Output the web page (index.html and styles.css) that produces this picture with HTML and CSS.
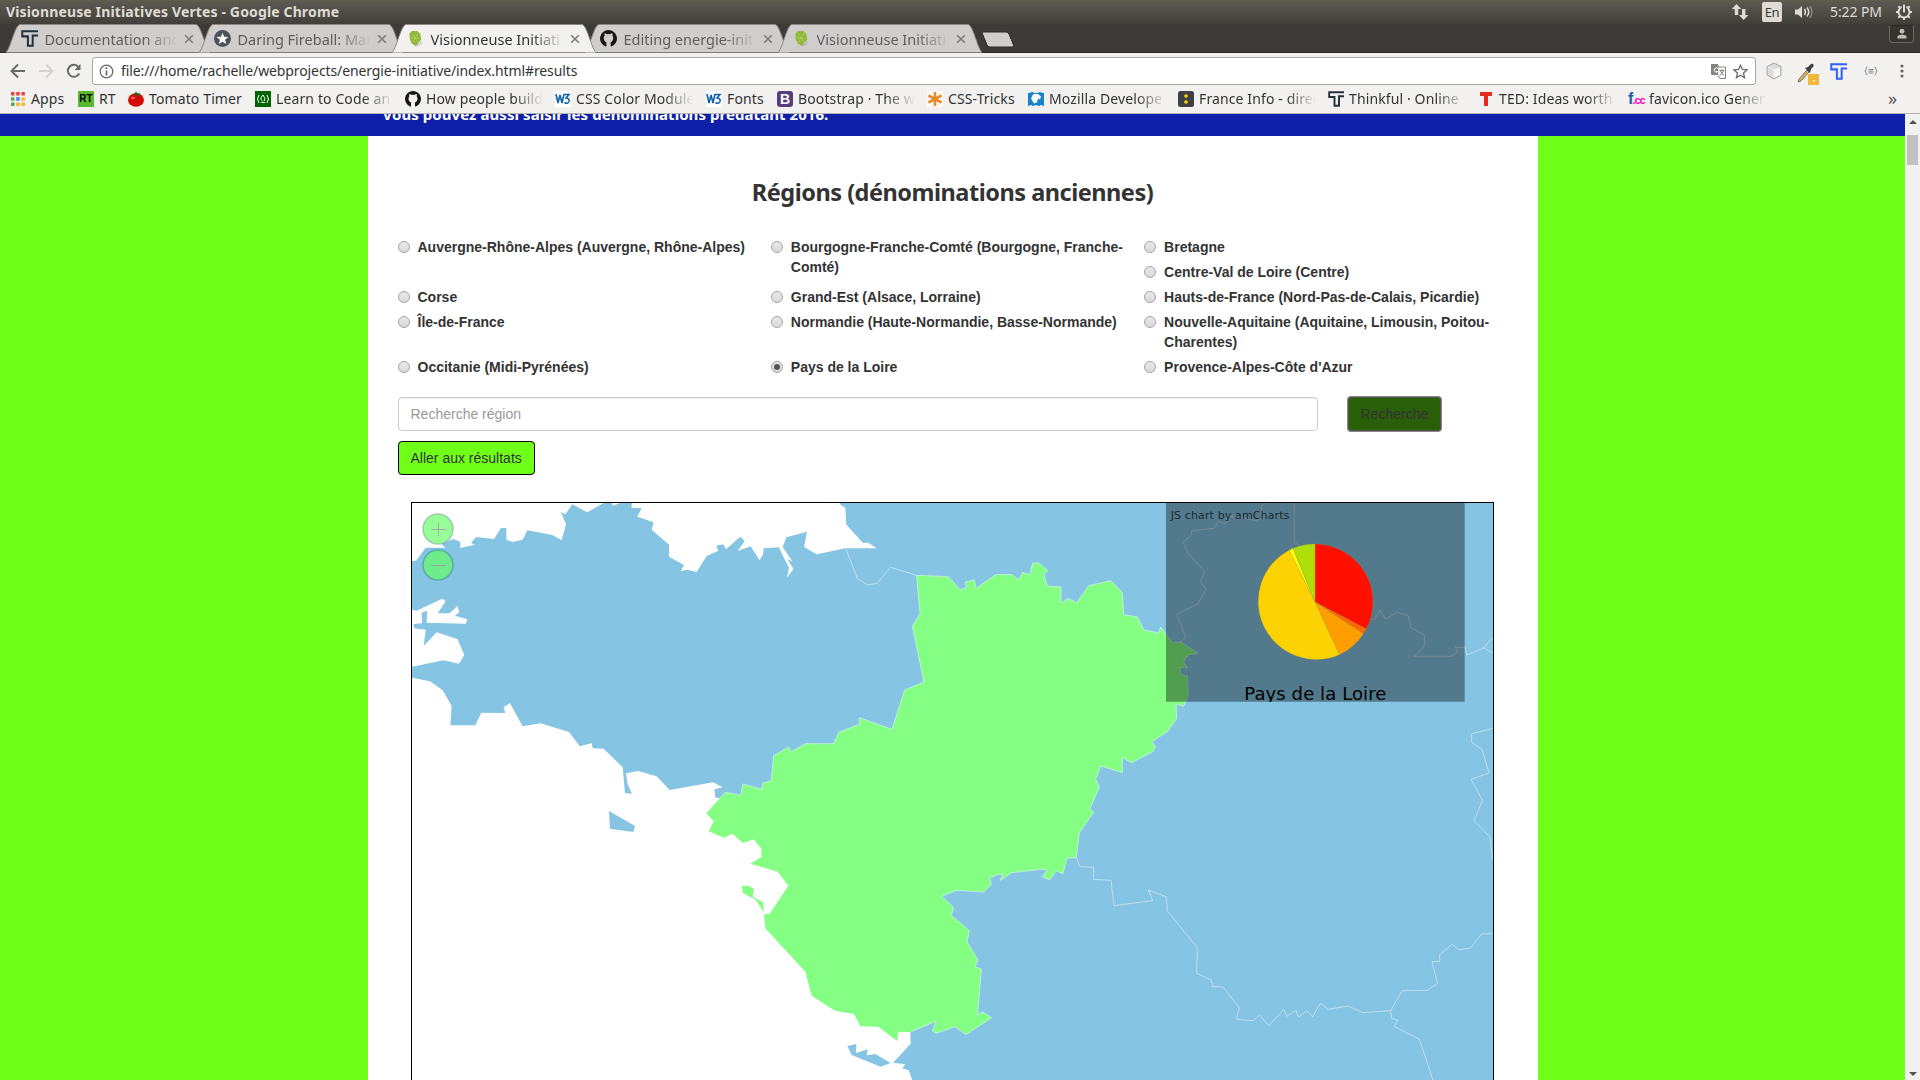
FILE: index.html
```html
<!DOCTYPE html>
<html lang="fr">
<head>
<meta charset="utf-8">
<title>Visionneuse Initiatives Vertes</title>
<link rel="stylesheet" href="styles.css">
</head>
<body>
<svg class="defs" width="0" height="0">
  <symbol id="thinkful" viewBox="0 0 16 16"><path d="M16 1.200H1.200V6H6.500V14.800H11V5.200H16" fill="none" stroke="currentColor" stroke-width="1.900"/></symbol>
  <symbol id="github" viewBox="0 0 16 16"><path fill="#161614" fill-rule="evenodd" d="M8 0a8 8 0 0 0-3 15.400c.6.200 1 0 1-.5v-3.400C4.200 10.800 3.500 9.300 3.500 7.500c0-.9.300-1.600.8-2.100-.2-.6-.2-1.400.1-2.300.8 0 1.500.3 2.200.8a7 7 0 0 1 2.800 0c.7-.5 1.400-.8 2.200-.8.3.9.3 1.700.1 2.300.5.500.8 1.200.8 2.100 0 1.800-.7 3.300-2.500 4v3.400c0 .5.4.7 1 .5A8 8 0 0 0 8 0z"/></symbol>
  <symbol id="leaf" viewBox="0 0 16 18"><path d="M4 1h6l3 3 1 6-3 4-3 3-4-3-2-4-.5-6z" fill="#8fb93a"/><path d="M5 4l6 9M11 3L5 13M3 8l9 1" stroke="#b9d36b" stroke-width=".7"/><path d="M8 17l5-2 1-3" stroke="#aaa" fill="none"/></symbol>
  <symbol id="close" viewBox="0 0 10 10"><path d="M1.200 1.200l7.600 7.600M8.800 1.200L1.200 8.800" stroke="#7d7c7b" stroke-width="1.600"/></symbol>
  <symbol id="tabshape" viewBox="0 0 204 29"><path d="M0 28.500C5 23 9 1 14 .500H190C195 1 199 23 204 28.500" fill="currentColor" stroke="#8a8987" stroke-width="1"/></symbol>
  <symbol id="w3" viewBox="0 0 16 16"><path fill="#fff" d="M0 0h16v16H0z"/><path d="M1 3l2 9 2-8 2 8 2-9M9 3.500h5l-3 3.500q4 .5 3 3.500-1.500 3-4.500 1" fill="none" stroke="#1162a8" stroke-width="1.600"/></symbol>
</svg>

<header class="titlebar">
  <span class="wtitle">Visionneuse Initiatives Vertes - Google Chrome</span>
  <div class="tray">
    <svg class="updown" width="18" height="18" viewBox="0 0 18 18"><path d="M5.500 1L.8 6h3v6h3.400V6h3zM12.700 17l4.700-5h-3V6H11v6H8z" fill="#dfdbd2"/></svg>
    <span class="lang">En</span>
    <svg class="vol" width="20" height="16" viewBox="0 0 20 16"><path d="M1 5.500h3l4-3.500v12L4 10.500H1z" fill="#dfdbd2"/><path d="M10.500 5q2 3 0 6M13 3.500q3.500 4.500 0 9" fill="none" stroke="#dfdbd2" stroke-width="1.500"/><path d="M15.500 2q5 6 0 12" fill="none" stroke="#8d8a82" stroke-width="1.300"/></svg>
    <span class="clock">5:22 PM</span>
    <svg class="gear" width="18" height="18" viewBox="0 0 18 18"><circle cx="9" cy="9" r="5.500" fill="none" stroke="#dfdbd2" stroke-width="2"/><path d="M9 14v3M1 9h3M14 9h3M3.300 3.300l2 2M12.700 12.700l2 2M14.700 3.300l-2 2M3.300 14.700l2-2" stroke="#dfdbd2" stroke-width="2"/><path d="M9 1v6" stroke="#4b4a44" stroke-width="4.500"/><path d="M9 1.500v8" stroke="#dfdbd2" stroke-width="2"/></svg>
  </div>
</header>

<nav class="tabstrip">
  <div class="tab"><svg class="shape"><use href="#tabshape"/></svg><svg class="fav navy"><use href="#thinkful"/></svg><span class="tt">Documentation and</span><svg class="x"><use href="#close"/></svg></div>
  <div class="tab"><svg class="shape"><use href="#tabshape"/></svg><svg class="fav" viewBox="0 0 16 16"><circle cx="8" cy="8" r="8" fill="#4a525a"/><path fill="#fff" d="M8 2.500l1.500 3.900 4.100.2-3.200 2.600 1.100 4L8 11l-3.500 2.200 1.100-4L2.400 6.600l4.100-.2z"/></svg><span class="tt">Daring Fireball: Mar</span><svg class="x"><use href="#close"/></svg></div>
  <div class="tab active"><svg class="shape"><use href="#tabshape"/></svg><svg class="fav"><use href="#leaf"/></svg><span class="tt">Visionneuse Initiati</span><svg class="x"><use href="#close"/></svg></div>
  <div class="tab"><svg class="shape"><use href="#tabshape"/></svg><svg class="fav"><use href="#github"/></svg><span class="tt">Editing energie-init</span><svg class="x"><use href="#close"/></svg></div>
  <div class="tab"><svg class="shape"><use href="#tabshape"/></svg><svg class="fav"><use href="#leaf"/></svg><span class="tt">Visionneuse Initiati</span><svg class="x"><use href="#close"/></svg></div>
  <svg class="newtab" width="36" height="17" viewBox="0 0 36 17"><path d="M3.500 1H26q2 0 3 2l4.500 11q.5 2-1.500 2H10q-2 0-3-2L2.500 3q-.5-2 1-2z" fill="#d0cecd" stroke="#2c2b28"/></svg>
  <div class="profile"><svg width="12" height="12" viewBox="0 0 12 12"><circle cx="6" cy="3.200" r="2.400" fill="#bfbdb8"/><path d="M1.500 10.500V8q2-1.500 4.500-1.500T10.500 8v2.500z" fill="#bfbdb8"/></svg></div>
</nav>

<div class="toolbar">
  <svg class="navicon" viewBox="0 0 16 16"><path d="M15 8H2M8 1.500L1.500 8 8 14.500" fill="none" stroke="#6b6a69" stroke-width="2"/></svg>
  <svg class="navicon" viewBox="0 0 16 16"><path d="M1 8h13M8 1.500L14.500 8 8 14.500" fill="none" stroke="#d3d2d1" stroke-width="2"/></svg>
  <svg class="navicon" viewBox="0 0 16 16"><path d="M13.200 10.500A6 6 0 1 1 12.500 4" fill="none" stroke="#6b6a69" stroke-width="2"/><path d="M14.500 1v6h-6z" fill="#6b6a69"/></svg>
  <div class="omnibox">
    <svg width="15" height="15" viewBox="0 0 15 15"><circle cx="7.500" cy="7.500" r="6.300" fill="none" stroke="#6b6a69" stroke-width="1.300"/><path d="M7.500 3.300v1.800M7.500 6.500v5" stroke="#6b6a69" stroke-width="1.700"/></svg>
    <span class="url">file:///home/rachelle/webprojects/energie-initiative/index.html#results</span>
    <svg width="15" height="15" viewBox="0 0 15 15"><path d="M0 0h7l3 11H1q-1 0-1-1z" fill="#858483"/><path d="M7.500 3H14.500V14.500H9L7 11.500" fill="#fff" stroke="#858483"/><path d="M8.500 6.500h5M11 5v1.500M12.500 6.500q-1 3.500-4 5M9.500 7q1 3 3.500 4.500" stroke="#858483" fill="none"/><path d="M7 4.500a2.200 2.200 0 1 0 0 3H5" stroke="#fff" fill="none"/></svg>
    <svg width="15" height="15" viewBox="0 0 15 15"><path d="M7.500 1.200l1.900 4.300 4.600.4-3.500 3.100 1 4.600-4-2.400-4 2.400 1-4.600L1 5.900l4.600-.4z" fill="none" stroke="#6b6a69" stroke-width="1.300"/></svg>
  </div>
  <svg class="ext" viewBox="0 0 18 18"><path d="M9 1l7 3.500v8.500l-7 4-7-4V4.500z" fill="#dcdcdc" stroke="#a5a5a5"/><path d="M9 8l6-3v8L9 16z" fill="#f7f7f7"/><path d="M3 5l6 3v8" stroke="#f2f2f2" fill="none"/></svg>
  <svg class="ext dropper" viewBox="0 0 22 22"><path d="M2 16l8-9 2 2-8 9-3 1z" fill="#e0b050" stroke="#777"/><path d="M8 5l3-1 3-3q3-1 2.500 2.500L14 6l-1 4z" fill="#3c4043"/><path fill="#f0b93c" d="M11 11h11v11H11z"/><path fill="#fff" d="M16 17h1.500v1.500H16z"/></svg>
  <svg class="ext blue"><use href="#thinkful"/></svg>
  <svg class="ext json" viewBox="0 0 14 12"><path d="M3.500 2Q2 2 2 4t-1.200 2Q2 6 2 8t1.500 2M10.500 2q1.500 0 1.500 2t1.200 2Q12 6 12 8t-1.500 2M4.500 4.500h5M4.500 6.200h5M4.500 8h5" fill="none" stroke="#8a8988"/></svg>
  <svg class="menu" viewBox="0 0 4 14"><circle cx="2" cy="2" r="1.600" fill="#6b6a69"/><circle cx="2" cy="7" r="1.600" fill="#6b6a69"/><circle cx="2" cy="12" r="1.600" fill="#6b6a69"/></svg>
</div>

<div class="bookmarks">
  <a class="bm"><svg viewBox="0 0 16 16"><path fill="#e8453c" d="M1 1h3.500v3.500H1zM6.200 1h3.500v3.500H6.200zM11.400 1h3.500v3.500h-3.500z"/><path fill="#4caf50" d="M1 6.200h3.500v3.500H1zM1 11.400h3.500v3.500H1z"/><path fill="#4285f4" d="M6.200 6.200h3.500v3.500H6.200z"/><path fill="#f9b42d" d="M11.400 6.200h3.500v3.500h-3.500zM6.200 11.400h3.500v3.500H6.200zM11.400 11.400h3.500v3.500h-3.500z"/></svg><span>Apps</span></a>
  <a class="bm"><span class="ico rt">RT</span><span>RT</span></a>
  <a class="bm"><svg viewBox="0 0 16 16"><ellipse cx="8" cy="9" rx="8" ry="6.800" fill="#d40b05"/><ellipse cx="5" cy="7" rx="2" ry="1.300" fill="#f56a5a"/><path d="M8 4L4 3l3-.5L8 0l1 2.500 4 0-3 1.500 1 3-3-3-3 2z" fill="#126b14"/></svg><span>Tomato Timer</span></a>
  <a class="bm cut"><svg viewBox="0 0 16 16"><path fill="#006400" d="M0 0h16v16H0z"/><path d="M4 4q-3 4 0 8M12 4q3 4 0 8M6 11.500h4M8 4q-4 4-.5 6M8 4q3.500 4 1 6" fill="none" stroke="#fff"/></svg><span>Learn to Code an</span></a>
  <a class="bm cut"><svg><use href="#github"/></svg><span>How people build</span></a>
  <a class="bm cut"><svg><use href="#w3"/></svg><span>CSS Color Module</span></a>
  <a class="bm"><svg><use href="#w3"/></svg><span>Fonts</span></a>
  <a class="bm cut"><span class="ico boot">B</span><span>Bootstrap · The w</span></a>
  <a class="bm"><svg viewBox="0 0 16 16"><path fill="#fffaf3" d="M0 0h16v16H0z"/><path d="M8 1v14M1.500 4.500l13 7M14.500 4.500l-13 7" stroke="#e58a2b" stroke-width="2.600"/></svg><span>CSS-Tricks</span></a>
  <a class="bm cut"><svg viewBox="0 0 16 16"><path fill="#1583c8" d="M0 2q2 0 4-1 4 2 8 0 2 1 4 1v13l-3-1-2 1-3-1-3 1-2-1-3 1z"/><path d="M5 3.500q5-2 8 2l-1 3-2-1-1 4-3 1-3-5z" fill="#fff"/></svg><span>Mozilla Develope</span></a>
  <a class="bm cut"><svg viewBox="0 0 16 16"><rect width="16" height="16" rx="2.500" fill="#3e4043"/><circle cx="8" cy="5" r="1.800" fill="#ffd900"/><circle cx="8" cy="11" r="1.800" fill="#ffd900"/></svg><span>France Info - direc</span></a>
  <a class="bm cut"><svg class="navy"><use href="#thinkful"/></svg><span>Thinkful · Online</span></a>
  <a class="bm cut"><svg viewBox="0 0 16 16"><path fill="#e62b1e" d="M2 1h12v4h-4v10H6V5H2z"/></svg><span>TED: Ideas worth</span></a>
  <a class="bm cut"><span class="ico fav-cc"><b>f</b>.cc</span><span>favicon.ico Gener</span></a>
  <span class="more">»</span>
</div>

<div class="viewport">
  <main class="page">
    <div class="banner"><div class="wrap"><p>Vous pouvez aussi saisir les dénominations prédatant 2016.</p></div></div>
    <section class="wrap panel">
      <h3>Régions (dénominations anciennes)</h3>
      <form>
        <div class="regions">
          <label><i></i>Auvergne-Rhône-Alpes (Auvergne, Rhône-Alpes)</label>
          <label><i></i>Bourgogne-Franche-Comté (Bourgogne, Franche-Comté)</label>
          <div class="stack"><label><i></i>Bretagne</label><label><i></i>Centre-Val de Loire (Centre)</label></div>
          <label><i></i>Corse</label>
          <label><i></i>Grand-Est (Alsace, Lorraine)</label>
          <label><i></i>Hauts-de-France (Nord-Pas-de-Calais, Picardie)</label>
          <label><i></i>Île-de-France</label>
          <label><i></i>Normandie (Haute-Normandie, Basse-Normande)</label>
          <label><i></i>Nouvelle-Aquitaine (Aquitaine, Limousin, Poitou-Charentes)</label>
          <label><i></i>Occitanie (Midi-Pyrénées)</label>
          <label><i class="on"></i>Pays de la Loire</label>
          <label><i></i>Provence-Alpes-Côte d'Azur</label>
        </div>
        <div class="search">
          <input type="text" placeholder="Recherche région">
          <button type="button" class="btn dark">Recherche</button>
        </div>
        <button type="button" class="btn">Aller aux résultats</button>
      </form>
      <div class="map">
        <svg class="land" viewBox="36 39 3243 1731" width="1081" height="577">
          <g fill="#85c4e3">
            <path d="M3300 20H1320V39L1322 45 1336 53 1339 104 1389 159 1405 158 1430 175 1337 175 1250 193 1212 171 1221 125 1159 142 1148 171 1178 215 1162 207 1180 237 1161 264 1167 233 1136 172 1091 175 1089 194 1079 211 1052 169 1013 183 1034 153 1021 140 978 178 970 163 949 167 955 182 920 198 890 246 860 239 842 244 852 225 807 200 807 164 755 119 761 97 712 80 725 54 695 54 695 30 660 39 638 47 636 39 611 39 562 67 517 43 496 73 483 66 498 103 485 151 457 135 382 121 368 149 337 156 319 149 319 114 303 114 282 147 229 141 213 158 224 164 181 174 181 155 160 147 124 162 136 173 77 173 48 212 36 214H20V356L50 362 127 326 137 334 113 370 149 370 172 348 178 367 165 377 202 388 197 401 80 398 81 362 65 368 66 400 40 402 43 415 77 419 71 468 110 427 173 448 193 495 177 521 130 511 36 530H20V560L36 563 90 574 128 601 155 648 151 706 226 706 244 668 316 669 311 652 330 640 368 709 422 700 507 726 539 769 575 760 578 775 611 776 668 832 675 909 696 911 683 883 678 850 714 843 770 859 809 900 939 877 968 892 943 898 946 923 960 924 1200 940 1500 1500 1531 1626 1532 1661 1479 1718 1516 1723 1507 1735 1526 1741 1537 1770V1790H3300Z"/>
            <path d="M627 963L705 1008 700 1026 630 1016ZM1342 1668L1369 1662 1368 1689 1403 1678 1400 1696 1426 1692 1472 1719 1442 1730 1355 1695Z"/>
          </g>
          <g fill="#84ff84">
            <path stroke="#c9f1e2" stroke-width="2.500" d="M960 924L976 907 1022 916 1029 882 1086 898 1088 879 1114 872 1121 797 1166 771 1174 785 1216 761 1301 761 1316 727 1378 703 1378 683 1476 718 1514 600 1572 576 1537 409 1560 371 1550 256 1645 260 1681 300 1700 291 1695 277 1723 269 1728 295 1787 254 1836 254 1855 269 1868 247 1890 254 1898 219 1917 219 1943 242 1932 254 1942 288 1983 291 1983 339 2004 325 2030 338 2066 287 2132 272 2167 308 2171 374 2212 381 2232 420 2276 429 2282 411 2317 458 2343 455 2393 490 2366 494 2350 515 2362 533 2341 533 2342 553 2362 559 2365 614 2351 649 2328 642 2330 686 2303 724 2255 755 2267 771 2258 785 2195 818 2167 803 2167 848 2103 828 2087 868 2098 892 2070 956 2081 967 2038 1028 2029 1103 2001 1104 1989 1151 1969 1142 1949 1170 1927 1160 1943 1140 1923 1138 1835 1148 1801 1171 1808 1154 1794 1153 1769 1164 1774 1184 1751 1206 1669 1201 1625 1219 1661 1253 1654 1276 1708 1322 1701 1355 1734 1411 1726 1430 1744 1437 1733 1575 1747 1565 1775 1583 1698 1634 1665 1610 1608 1630 1597 1622 1609 1593 1531 1626"/>
            <path d="M1531 1626L1494 1627 1492 1653 1435 1610 1381 1609 1362 1572 1305 1562 1235 1517 1216 1445 1096 1315 1092 1273 1109 1271 1165 1187 1133 1145 1051 1121 1085 1100 1083 1040 1029 1059 997 1031 972 1043 926 1024 941 994 919 970 960 924 1200 940 1560 1560Z"/>
            <path d="M1025 1188L1047 1187 1062 1198 1058 1220 1089 1236 1091 1267 1068 1230 1029 1209Z"/>
          </g>
          <g fill="none" stroke="#fff" stroke-width="3" stroke-opacity=".45">
            <path d="M1337 175L1372 265 1402 285 1431 280 1472 232 1550 256"/>
            <path transform="translate(2220)" d="M123 455L137 442 111 373 174 341 199 298 181 275 194 244 145 190 128 156 152 139 156 122 222 115 235 94 258 102 261 80 288 80 350 92 363 85 365 46 378 39M463 39V155L480 170 520 300 695 388 704 388 719 360 737 388 772 366 805 378 813 413 853 435 853 470 822 499 934 499 953 486 946 472 974 472 981 495 1031 474 1060 440M1031 474L1060 489M1060 715L995 731 995 757 1026 778 1047 849 993 868 1028 931 1002 992 1050 1041 1058 1110"/>
            <path transform="translate(1980 750)" d="M49 353L59 380 101 382 101 418 153 421 162 497 278 482 265 450 318 470 323 514 412 623 410 700 454 720 457 740 489 741 538 803 529 838 579 842 599 825 626 857 672 809 680 829 708 811 715 831 740 813 758 830 781 790 804 808 864 798 908 818 992 812 995 835 1014 841 1002 859 1078 898 1119 1020M992 812L1027 752 1102 751 1133 730 1116 665 1139 664 1139 644 1177 612 1195 629 1232 624 1264 582 1300 581"/>
          </g>
        </svg>
        <div class="zoom">
          <svg viewBox="0 0 32 32"><circle cx="16" cy="16" r="15" fill="#6fff6f" fill-opacity=".72" stroke="#789a90" stroke-opacity=".5" stroke-width="1.500"/><path d="M9.500 16.500h14M16.500 9.500v14" stroke="#a8a4a8"/></svg>
          <svg viewBox="0 0 32 32"><circle cx="16" cy="16" r="15" fill="#6cf082" fill-opacity=".9" stroke="#4a9c9a" stroke-opacity=".7" stroke-width="1.500"/><path d="M9.500 16.500h14" stroke="#9aa59f"/></svg>
        </div>
        <svg class="chart" viewBox="78 39 897 597" width="299" height="199">
          <path d="M78 39H974V635H78Z" fill-opacity=".38"/>
          <text x="92" y="87" font-size="33" textLength="356" fill-opacity=".7">JS chart by amCharts</text>
          <g stroke="#a89a40" stroke-opacity=".3" stroke-width="2">
            <path fill="#ff0f00" d="M525 336V162A174 174 0 0 1 679 417Z"/>
            <path fill="#ff6600" d="M525 336L679 417A174 174 0 0 1 670 431Z"/>
            <path fill="#ff9e01" d="M525 336L670 431A174 174 0 0 1 598 494Z"/>
            <path fill="#fcd202" d="M525 336L598 494A174 174 0 0 1 447.500 180.500Z"/>
            <path fill="#f8ff01" d="M525 336L447.500 180.500A174 174 0 0 1 459 175Z"/>
            <path fill="#b0de09" d="M525 336L459 175A174 174 0 0 1 525 162Z"/>
          </g>
          <text x="313" y="630" font-size="54" textLength="426">Pays de la Loire</text>
        </svg>
      </div>
    </section>
  </main>
  <div class="scrollbar"><b class="up"></b><b class="thumb"></b><b class="down"></b></div>
</div>
</body>
</html>
```
FILE: styles.css
```css
* { box-sizing: border-box; }
html, body { height: 100%; }
body { margin: 0; height: 1080px; overflow: hidden; display: flex; flex-direction: column; font-family: "Noto Sans", "Open Sans", sans-serif; font-size: 14px; color: #333; background: #fff; }
.defs { position: absolute; }

.titlebar { flex: none; height: 24px; display: flex; align-items: center; justify-content: space-between; padding: 0 7px 0 6px; background: linear-gradient(#615e50 0, #5a5850 10%, #403f3a); color: #dfdbd2; }
.wtitle { font-weight: bold; font-size: 14px; line-height: 20px; letter-spacing: .14px; white-space: nowrap; }
.tray { display: flex; align-items: center; }
.updown { margin-right: 13px; }
.lang { width: 20px; height: 20px; margin: 0 12px 0 0; border-radius: 2px; background: #dfdbd2; color: #3c3b37; font-size: 13px; line-height: 20px; text-align: center; letter-spacing: -.5px; }
.clock { width: 53px; margin: 0 12px 0 16px; font-size: 14px; line-height: 18px; letter-spacing: -.1px; white-space: nowrap; }

.tabstrip { flex: none; height: 29px; display: flex; padding-left: 5.500px; background: #3c3b37; border-bottom: 1px solid #2c2b28; position: relative; z-index: 1; }
.tab { position: relative; width: 204px; height: 29px; margin-right: -11px; display: flex; align-items: center; padding-left: 15px; color: #d0cecd; flex: none; }
.tab.active { color: #f2f1f0; z-index: 2; }
.shape { position: absolute; left: 0; top: 0; width: 204px; height: 29px; }
.fav { position: relative; width: 17px; height: 17px; flex: none; margin-right: 7px; }
.navy { color: #25303b; }
.tt { position: relative; width: 134px; white-space: nowrap; color: #5f5e5d; font-size: 14.500px; line-height: 20px; -webkit-mask-image: linear-gradient(90deg, #000 100px, transparent 133px); mask-image: linear-gradient(90deg, #000 100px, transparent 133px); }
.active .tt { color: #333; }
.x { position: relative; width: 10px; height: 10px; margin-left: 5px; }
.newtab { margin: 7px 0 0 9px; flex: none; }
.profile { width: 25px; height: 18px; margin: 1px 6px 0 auto; display: flex; align-items: center; justify-content: center; border: 1px solid #6b6965; border-top-color: #2c2b28; border-radius: 0 0 4px 4px; background: #35342f; }

.toolbar { flex: none; height: 33px; display: flex; align-items: center; padding: 3px 16px 0 10px; background: #f2f1f0; }
.navicon { width: 16px; height: 16px; margin-right: 12px; flex: none; }
.omnibox { flex: none; width: 1664px; height: 28px; display: flex; align-items: center; gap: 7px; margin-left: -2px; padding: 0 7px 0 6px; background: #fff; border: 1px solid #a9a8a7; border-radius: 3px; }
.url { flex: 1; color: #333; font-size: 14px; letter-spacing: -.11px; line-height: 20px; margin-top: -1px; white-space: nowrap; }
.ext { flex: none; width: 18px; height: 18px; margin-left: 9px; }
.dropper { width: 22px; height: 22px; margin: 5px -1px 0 14px; }
.blue { width: 17px; height: 17px; color: #2f5fff; margin-left: 12px; }
.blue, .fav, .bm svg { overflow: hidden; }
.json { width: 14px; height: 12px; margin-left: 17px; }
.menu { width: 4px; height: 16px; margin: 0 0 0 auto; flex: none; }

.bookmarks { flex: none; height: 28px; padding: 0 0 2px 10px; display: grid; grid-template-columns: 68px 50px 127px 150px 150px 151px 71px 150px 101px 150px 150px 150px 150px 150px 1fr; align-items: center; background: #f2f1f0; border-bottom: 1px solid #b6b4b2; }
.bm { display: flex; align-items: center; gap: 5px; color: #333; font-size: 14px; letter-spacing: .12px; line-height: 22px; white-space: nowrap; min-width: 0; }
.bm > svg, .ico { width: 16px; height: 16px; flex: none; }
.bm > span:last-child { margin-top: 1px; }
.cut > span:last-child { width: 118px; -webkit-mask-image: linear-gradient(90deg, #000 88px, transparent 117px); mask-image: linear-gradient(90deg, #000 88px, transparent 117px); }
.ico { font: bold 11px/16px "Liberation Sans", sans-serif; text-align: center; }
.rt { background: #5cb82c; color: #000; font-size: 10px; }
.boot { background: #563d7c; color: #fff; border-radius: 3px; font-size: 14px; }
.fav-cc { color: #ff00c8; letter-spacing: -1px; white-space: nowrap; }
.fav-cc b { color: #1c5fa8; font-size: 16px; }
.more { font-size: 18px; padding-left: 110px; color: #555; line-height: 20px; margin-top: -2px; }

.viewport { flex: 1; min-height: 0; display: flex; overflow: hidden; }
.page { width: 1905px; flex: none; overflow: hidden; background: #70ff18; }
.banner { height: 22px; background: #0f1fa8; overflow: hidden; }
.wrap { width: 1170px; margin: 0 auto; padding: 0 15px; }
.banner p { margin: -12px 0 0; color: #fff; font-weight: bold; font-size: 15px; line-height: 24px; letter-spacing: .06px; white-space: nowrap; }
.panel { height: 944px; padding: 0 30px; background: #fff; overflow: hidden; }
h3 { margin: 0; padding-top: 40px; height: 101px; font-size: 23.500px; line-height: 32px; text-align: center; letter-spacing: -.48px; }
.regions { display: grid; grid-template-columns: repeat(3, 373.300px); row-gap: 5px; margin-right: -30px; font: bold 14px/20px "Liberation Sans", Arial, sans-serif; }
.regions label { position: relative; display: block; padding: 0 12px 0 20px; }
.stack { display: grid; row-gap: 5px; align-content: start; }
.regions i { position: absolute; left: 0; top: 4px; width: 12px; height: 12px; border: 1px solid #a5a5a5; border-radius: 50%; background: linear-gradient(#e8e8e8, #d9d9d9); }
.regions i.on::after { content: ""; position: absolute; left: 2px; top: 2px; width: 6px; height: 6px; border-radius: 50%; background: #555; }
.search { display: flex; gap: 30px; margin-top: 20px; margin-bottom: 10px; }
.search input { width: 920px; height: 34px; padding: 6px 12px; border: 1px solid #ccc; border-radius: 4px; box-shadow: inset 0 1px 1px rgba(0,0,0,.075); font: 14px/20px "Liberation Sans", Arial, sans-serif; }
.search input::placeholder { color: #999; }
.btn { display: block; height: 34px; padding: 0 12px; border: 1px solid #000; border-radius: 4px; background: #70ff18; color: #333; font: 14px/20px "Liberation Sans", Arial, sans-serif; }
.btn.dark { background: #2a5f0a; border-color: #4c5a48; border-radius: 3px; box-shadow: 0 0 0 1px #8b828b; }

.map { position: relative; width: 1083px; height: 579px; margin: 27px 0 0 13px; border: 1px solid #000; border-bottom: 0; overflow: hidden; background: #fff; }
.land { display: block; }
.zoom { position: absolute; left: 10px; top: 10px; display: flex; flex-direction: column; gap: 4px; }
.zoom svg { width: 32px; height: 32px; display: block; }
.chart { position: absolute; left: 754px; top: 0; font-family: "DejaVu Sans", Verdana, sans-serif; }

.scrollbar { width: 15px; background: #f1f1f1; display: flex; flex-direction: column; align-items: center; padding: 6px 0 4px; }
.up, .down { border: 4px solid transparent; width: 0; height: 0; }
.up { border-top: 0; border-bottom: 4px solid #505050; }
.down { border-bottom: 0; border-top: 4px solid #505050; margin-top: auto; }
.thumb { width: 11px; height: 30px; margin-top: 11px; background: #c1c1c1; }
```
